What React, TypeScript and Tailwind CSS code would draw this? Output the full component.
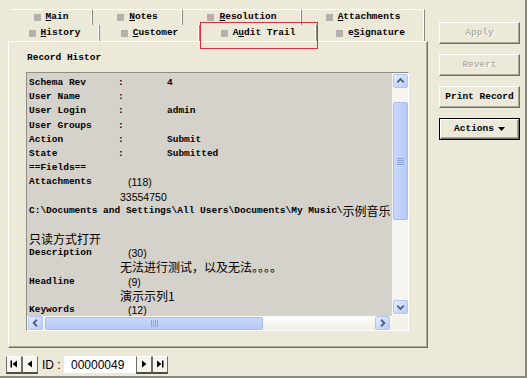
import React from "react";

// Fonts
const mono = "font-['Liberation_Mono','Noto_Sans_CJK_SC',monospace] text-[9.5px] font-bold";
const sans = "font-['Liberation_Sans',Arial,sans-serif] font-normal";
const cjk = "font-['Noto_Sans_CJK_SC',sans-serif] text-[12px] font-normal";

type Tab = { pre: string; hot: string; post: string; cls: string };

const row1: Tab[] = [
  { pre: "", hot: "M", post: "ain", cls: "w-[83px]" },
  { pre: "", hot: "N", post: "otes", cls: "w-[90px]" },
  { pre: "", hot: "R", post: "esolution", cls: "w-[119px]" },
  { pre: "", hot: "A", post: "ttachments", cls: "w-[123px]" },
];

const row2: Tab[] = [
  { pre: "", hot: "H", post: "istory", cls: "w-[90px]" },
  { pre: "", hot: "C", post: "ustomer", cls: "w-[100px]" },
  { pre: "A", hot: "u", post: "dit Trail", cls: "w-[117px]" },
  { pre: "e", hot: "S", post: "ignature", cls: "w-[108px]" },
];

const fields = [
  ["Schema Rev", ":", "4"],
  ["User Name", ":", ""],
  ["User Login", ":", "admin"],
  ["User Groups", ":", ""],
  ["Action", ":", "Submit"],
  ["State", ":", "Submitted"],
];

function TabItem({ tab, top }: { tab: Tab; top?: boolean }) {
  return (
    <div
      className={`${tab.cls} h-[16px] flex items-center justify-center gap-[5px] border-r border-[#8A887E] shadow-[inset_-1px_0_0_#FFFFFF] ${
        top ? "border-t border-t-white" : ""
      }`}
    >
      <span className="w-[7px] h-[7px] bg-[#B3B1A9]" />
      <span>
        {tab.pre}
        <span className="underline underline-offset-1">{tab.hot}</span>
        {tab.post}
      </span>
    </div>
  );
}

function Arrow({ dir }: { dir: "up" | "down" | "left" | "right" }) {
  const d = {
    up: "M3.5 8.5 L7 5 L10.5 8.5",
    down: "M3.5 5.5 L7 9 L10.5 5.5",
    left: "M8.5 3.5 L5 7 L8.5 10.5",
    right: "M5.5 3.5 L9 7 L5.5 10.5",
  }[dir];
  return (
    <div className="w-[15px] h-[14px] shrink-0 rounded-[2px] border border-[#B2C4EF] bg-gradient-to-br from-[#E6EEFF] to-[#B7CBF8] flex items-center justify-center">
      <svg width="14" height="14" viewBox="0 0 14 14">
        <path d={d} fill="none" stroke="#4D6185" strokeWidth="2" />
      </svg>
    </div>
  );
}

function Grip({ vertical }: { vertical?: boolean }) {
  return (
    <div className={`flex ${vertical ? "flex-col gap-[1px]" : "flex-row gap-[1px]"}`}>
      {[0, 1, 2, 3].map((i) => (
        <span
          key={i}
          className={vertical ? "w-[7px] h-[1px] bg-[#EEF3FE] border-b border-[#8CA5DC]" : "w-[1px] h-[7px] bg-[#EEF3FE] border-r border-[#8CA5DC]"}
        />
      ))}
    </div>
  );
}

function Line({ children }: { children?: React.ReactNode }) {
  return <div className="h-[14.2px] leading-[14.2px] whitespace-nowrap flex items-center">{children}</div>;
}

function SideButton({ label, disabled, focused }: { label: React.ReactNode; disabled?: boolean; focused?: boolean }) {
  return (
    <div className={`w-[81px] h-[22px] ${focused ? "border border-black" : ""}`}>
      <div
        className={`w-full h-full flex items-center justify-center border border-t-white border-l-white border-b-[#716F64] border-r-[#716F64] shadow-[inset_-1px_-1px_0_#ACA899] ${
          disabled ? "text-[#B5B2A6] [text-shadow:1px_1px_0_#FFFFFF]" : "text-black"
        }`}
      >
        {label}
      </div>
    </div>
  );
}

function NavButton({ children }: { children: React.ReactNode }) {
  return (
    <div className="w-[16px] h-[18px] flex items-center justify-center bg-[#F6F5F0] border border-t-white border-l-[#6E6C64] border-r-[#6E6C64] border-b-2 border-b-[#4E4C45]">
      {children}
    </div>
  );
}

export default function App() {
  return (
    <div className={`relative w-[527px] h-[378px] bg-[#ECE9D8] border-r-2 border-b-2 border-[#8C8A80] text-black ${mono} overflow-hidden`}>
      {/* Tabs + panel + side buttons */}
      <div className="flex flex-row">
        <div className="pl-[8px] pt-[9px] w-[428px]">
          {/* Tab rows */}
          <div className="flex flex-row pl-[2px]">
            {row1.map((t) => (
              <TabItem key={t.hot + t.post} tab={t} top />
            ))}
          </div>
          <div className="flex flex-row pl-[2px]">
            {row2.map((t) => (
              <TabItem key={t.hot + t.post} tab={t} />
            ))}
          </div>

          {/* Panel */}
          <div className="h-[307px] border border-t-white border-l-white border-r-[#716F64] border-b-[#716F64] shadow-[inset_-1px_-1px_0_#ACA899] pl-[17px] pt-[9px]">
            <div className="ml-[1px] h-[14px] leading-[14px] whitespace-nowrap">Record Histor</div>

            {/* Text box */}
            <div className="mt-[7px] w-[383px] h-[259px] border border-t-[#8F8D84] border-l-[#8F8D84] border-b-white border-r-white flex flex-col">
              <div className="flex flex-row h-[243px]">
                <div className="flex-1 bg-[#D5D2CC] overflow-hidden pt-[3px] pl-[2px]">
                  {fields.map(([a, b, c]) => (
                    <Line key={a}>
                      <span className="w-[89px] shrink-0">{a}</span>
                      <span className="w-[49px] shrink-0">{b}</span>
                      <span>{c}</span>
                    </Line>
                  ))}
                  <Line>==Fields==</Line>
                  <Line>
                    <span className="w-[99px] shrink-0">Attachments</span>
                    <span className={`${sans} text-[10.5px]`}>(118)</span>
                  </Line>
                  <Line>
                    <span className={`${sans} text-[10.5px] pl-[91px]`}>33554750</span>
                  </Line>
                  <Line>
                    <span>C:\Documents and Settings\All Users\Documents\My Music\</span>
                    <span className={cjk}>示例音乐</span>
                  </Line>
                  <Line />
                  <Line>
                    <span className={cjk}>只读方式打开</span>
                  </Line>
                  <Line>
                    <span className="w-[99px] shrink-0">Description</span>
                    <span className={`${sans} text-[10.5px]`}>(30)</span>
                  </Line>
                  <Line>
                    <span className={`${cjk} pl-[91px]`}>无法进行测试，以及无法。。。。</span>
                  </Line>
                  <Line>
                    <span className="w-[99px] shrink-0">Headline</span>
                    <span className={`${sans} text-[10.5px]`}>(9)</span>
                  </Line>
                  <Line>
                    <span className={`${cjk} pl-[91px]`}>演示示列1</span>
                  </Line>
                  <Line>
                    <span className="w-[99px] shrink-0">Keywords</span>
                    <span className={`${sans} text-[10.5px]`}>(12)</span>
                  </Line>
                </div>

                {/* Vertical scrollbar */}
                <div className="w-[16px] bg-[#F6F5F1] flex flex-col items-center pt-[1px] pb-[2px]">
                  <Arrow dir="up" />
                  <div className="mt-[14px] w-[15px] h-[118px] rounded-[2px] border border-[#A6BCEE] bg-gradient-to-r from-[#C9D8FC] to-[#B6CAF8] flex items-center justify-center">
                    <Grip vertical />
                  </div>
                  <div className="mt-auto">
                    <Arrow dir="down" />
                  </div>
                </div>
              </div>

              {/* Horizontal scrollbar */}
              <div className="flex flex-row h-[14px]">
                <div className="flex-1 bg-gradient-to-b from-[#FEFEFD] to-[#F1EFE8] flex flex-row items-center pl-[1px] pr-[2px]">
                  <Arrow dir="left" />
                  <div className="ml-[2px] w-[218px] h-[13px] rounded-[2px] border border-[#A6BCEE] bg-gradient-to-b from-[#C9D8FC] to-[#B6CAF8] flex items-center justify-center">
                    <Grip />
                  </div>
                  <div className="ml-auto">
                    <Arrow dir="right" />
                  </div>
                </div>
                <div className="w-[16px] bg-[#F3F1EA]" />
              </div>
            </div>
          </div>
        </div>

        {/* Side buttons */}
        <div className="pl-[11px] pt-[22px] flex flex-col gap-[10px]">
          <SideButton label="Apply" disabled />
          <SideButton label="Revert" disabled />
          <SideButton label="Print Record" />
          <SideButton
            focused
            label={
              <span className="flex items-center gap-[4px]">
                Actions
                <svg width="7" height="4" viewBox="0 0 7 4">
                  <path d="M0 0 H7 L3.5 4 Z" fill="#000" />
                </svg>
              </span>
            }
          />
        </div>
      </div>

      {/* Record navigation */}
      <div className={`mt-[7px] pl-[6px] flex flex-row items-center h-[19px] ${sans} text-[12px]`}>
        <NavButton>
          <svg width="8" height="8" viewBox="0 0 8 8">
            <rect x="0.5" y="0.5" width="1.5" height="7" fill="#000" />
            <path d="M7 0.5 V7.5 L2.5 4 Z" fill="#000" />
          </svg>
        </NavButton>
        <NavButton>
          <svg width="6" height="8" viewBox="0 0 6 8">
            <path d="M5 0.5 V7.5 L0.5 4 Z" fill="#000" />
          </svg>
        </NavButton>
        <span className="ml-[4px] w-[22px]">ID :</span>
        <div className="w-[72px] h-[17px] bg-white flex items-center pl-[7px]">00000049</div>
        <NavButton>
          <svg width="6" height="8" viewBox="0 0 6 8">
            <path d="M1 0.5 V7.5 L5.5 4 Z" fill="#000" />
          </svg>
        </NavButton>
        <NavButton>
          <svg width="8" height="8" viewBox="0 0 8 8">
            <path d="M1 0.5 V7.5 L5.5 4 Z" fill="#000" />
            <rect x="6" y="0.5" width="1.5" height="7" fill="#000" />
          </svg>
        </NavButton>
      </div>

      {/* Red highlight around the selected tab */}
      <div className="absolute left-[200px] top-[22px] w-[118px] h-[27px] border border-[#E0303C]" />
    </div>
  );
}
